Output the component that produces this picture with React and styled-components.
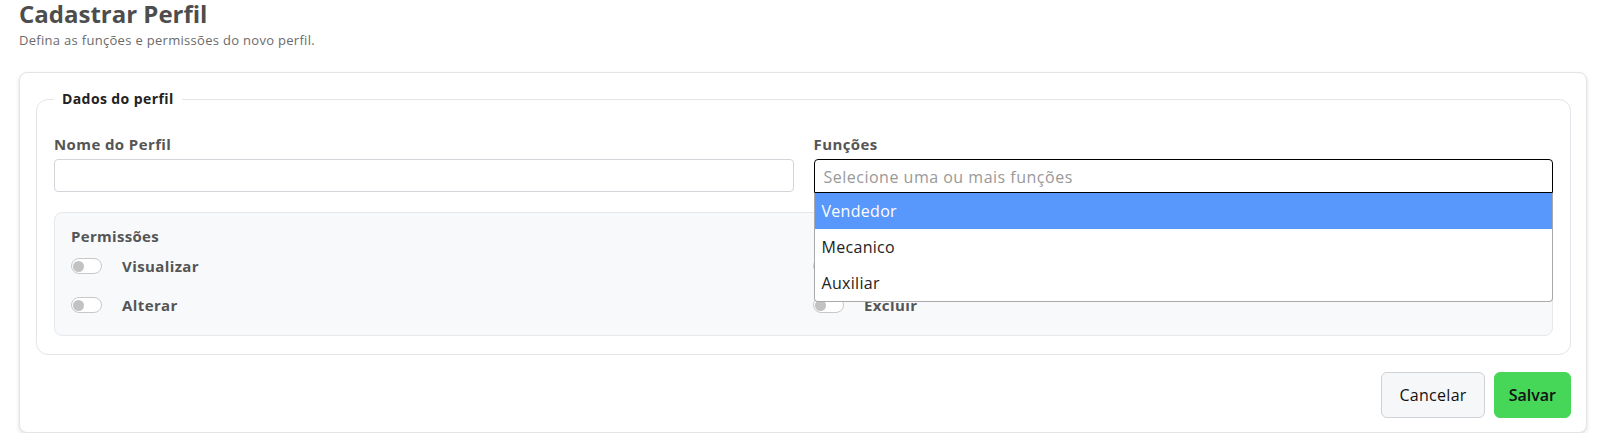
import React from "react";
import styled, { createGlobalStyle } from "styled-components";

const Global = createGlobalStyle`
  html, body { margin: 0; padding: 0; background: #fff; }
  body { font-family: "Open Sans", "Liberation Sans", sans-serif; color: #333; }
  * { box-sizing: border-box; }
`;

const Page = styled.div`
  padding: 0 18px 0 19px;
  display: flex;
  flex-direction: column;
`;

const Title = styled.h1`
  margin: 0;
  font-size: 24px;
  line-height: 28px;
  font-weight: 700;
  color: #4d4d4d;
`;

const Subtitle = styled.p`
  margin: 4px 0 0;
  font-size: 13px;
  line-height: 16px;
  letter-spacing: 0.3px;
  color: #6b6b6b;
`;

const Card = styled.section`
  margin-top: 24px;
  background: #fff;
  border: 1px solid #e4e4e4;
  border-radius: 8px;
  box-shadow: 0 2px 4px rgba(0, 0, 0, 0.12);
  padding: 18px 15px 14px 16px;
  display: flex;
  flex-direction: column;
  gap: 17px;
`;

const Fieldset = styled.fieldset`
  margin: 0;
  border: 1px solid #e4e4ea;
  border-radius: 12px;
  padding: 27px 17px 18px 17px;
  min-width: 0;
`;

const Legend = styled.legend`
  padding: 0 8px;
  font-size: 14px;
  font-weight: 700;
  letter-spacing: 0.4px;
  color: #222;
  line-height: 16px;
`;

const Grid = styled.div`
  display: grid;
  grid-template-columns: 1fr 1fr;
  column-gap: 20px;
`;

const Field = styled.div`
  display: flex;
  flex-direction: column;
  gap: 5px;
`;

const Label = styled.label`
  font-size: 15px;
  line-height: 20px;
  font-weight: 700;
  letter-spacing: 0.4px;
  color: #555;
`;

const TextInput = styled.input`
  height: 33px;
  border: 1px solid #d2d5da;
  border-radius: 4px;
  padding: 0 9px;
  font-size: 16px;
  font-family: inherit;
  outline: none;
  background: #fff;
`;

const SelectWrap = styled.div`
  position: relative;
`;

const Select = styled.div`
  height: 34px;
  border: 1px solid #000;
  border-radius: 4px 4px 0 0;
  padding: 2px 9px 0;
  display: flex;
  align-items: center;
  font-size: 16px;
  letter-spacing: 0.5px;
  color: #999;
  background: #fff;
`;

const Dropdown = styled.ul`
  position: absolute;
  top: 100%;
  left: 0;
  right: 0;
  margin: 0;
  padding: 0;
  list-style: none;
  background: #fff;
  border: 1px solid #aaa;
  border-top: none;
  border-radius: 0 0 4px 4px;
  z-index: 10;
`;

const Option = styled.li`
  padding: 6px 7px;
  font-size: 16px;
  line-height: 24px;
  letter-spacing: 0.3px;
  color: ${(p) => (p.$active ? "#fff" : "#222")};
  background: ${(p) => (p.$active ? "#5897fb" : "transparent")};
`;

const PermBox = styled.div`
  margin-top: 19px;
  background: #f8f9fb;
  border: 1px solid #e6e8ec;
  border-radius: 8px;
  padding: 13px 17px 18px 16px;
`;

const PermTitle = styled.div`
  font-size: 15px;
  line-height: 20px;
  font-weight: 700;
  letter-spacing: 0.3px;
  color: #555;
  margin-bottom: 8px;
`;

const PermGrid = styled.div`
  display: grid;
  grid-template-columns: 1fr 1fr;
  column-gap: 20px;
  row-gap: 15px;
`;

const PermItem = styled.div`
  display: flex;
  align-items: center;
  gap: 20px;
  height: 24px;
  font-size: 15px;
  font-weight: 700;
  letter-spacing: 0.4px;
  color: #555;
`;

const Toggle = styled.span`
  width: 31px;
  height: 16px;
  border: 1px solid #c8c8c8;
  border-radius: 8px;
  background: #fff;
  display: flex;
  align-items: center;
  padding-left: 1px;
  flex-shrink: 0;

  &::before {
    content: "";
    width: 11px;
    height: 11px;
    border-radius: 50%;
    background: #c2c2c2;
  }
`;

const Actions = styled.div`
  display: flex;
  justify-content: flex-end;
  gap: 9px;
`;

const Button = styled.button`
  height: 46px;
  padding: 0 ${(p) => (p.$primary ? "14px" : "17px")};
  border-radius: 6px;
  font-family: inherit;
  font-size: 16px;
  letter-spacing: ${(p) => (p.$primary ? "0" : "0.3px")};
  color: #111;
  border: 1px solid ${(p) => (p.$primary ? "#46d658" : "#cfd2d6")};
  background: ${(p) => (p.$primary ? "#46d658" : "#f6f7f9")};
  font-weight: ${(p) => (p.$primary ? 600 : 400)};
`;

const perms = ["Visualizar", "Incluir", "Alterar", "Excluir"];

export default function App() {
  return (
    <>
      <Global />
      <Page>
        <Title>Cadastrar Perfil</Title>
        <Subtitle>Defina as funções e permissões do novo perfil.</Subtitle>
        <Card>
          <Fieldset>
            <Legend>Dados do perfil</Legend>
            <Grid>
              <Field>
                <Label>Nome do Perfil</Label>
                <TextInput type="text" />
              </Field>
              <Field>
                <Label>Funções</Label>
                <SelectWrap>
                  <Select>Selecione uma ou mais funções</Select>
                  <Dropdown>
                    <Option $active>Vendedor</Option>
                    <Option>Mecanico</Option>
                    <Option>Auxiliar</Option>
                  </Dropdown>
                </SelectWrap>
              </Field>
            </Grid>
            <PermBox>
              <PermTitle>Permissões</PermTitle>
              <PermGrid>
                {perms.map((p) => (
                  <PermItem key={p}>
                    <Toggle />
                    {p}
                  </PermItem>
                ))}
              </PermGrid>
            </PermBox>
          </Fieldset>
          <Actions>
            <Button>Cancelar</Button>
            <Button $primary>Salvar</Button>
          </Actions>
        </Card>
      </Page>
    </>
  );
}
